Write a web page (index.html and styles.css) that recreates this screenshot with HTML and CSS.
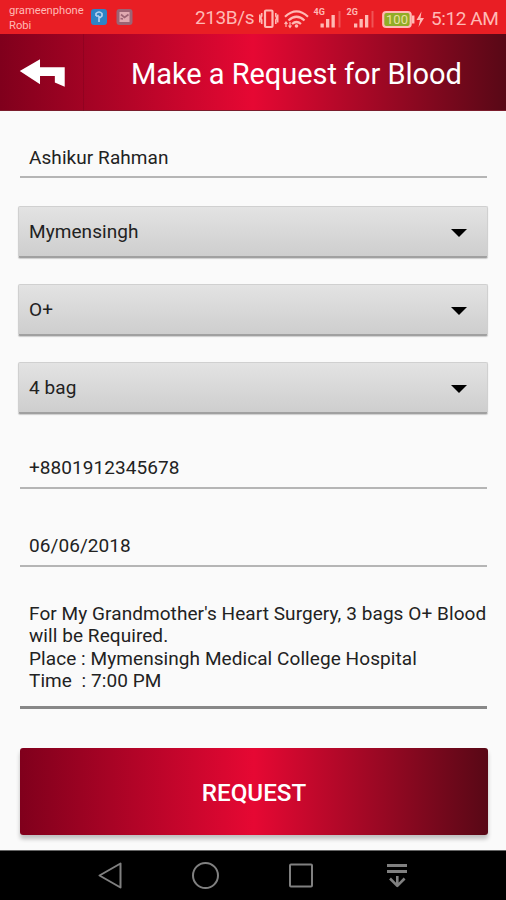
FILE: index.html
```html
<!DOCTYPE html>
<html lang="en">
<head>
<meta charset="utf-8">
<title>Make a Request for Blood</title>
<link rel="stylesheet" href="styles.css">
</head>
<body>
<div class="status">
  <div class="carriers"><span>grameenphone</span><span>Robi</span></div>
  <svg class="notices" width="44" height="18" viewBox="0 0 44 18">
    <rect x="1" y="1" width="16" height="16" rx="3" fill="#2d83c6"/>
    <path d="M9 14V8M6 8V5.500Q9 2.500 12 5.500V8Q10 10 9 10M6 8H9" fill="none" stroke="#b7d2ee" stroke-width="1.600"/>
    <rect x="26.500" y="1" width="16" height="16" rx="3" fill="#9c6474"/>
    <rect x="29.500" y="4" width="10" height="10" fill="#e0a9b1"/>
    <path d="M31 6.500l3.500 3 4-3M30.500 10.500l2.500.500" fill="none" stroke="#9c6474" stroke-width="1.700"/>
  </svg>
  <span class="speed">213B/s</span>
  <svg class="signals" width="170" height="32" viewBox="0 0 170 32" fill="none" stroke="#ffb9b4">
    <rect x="6" y="8.500" width="7.500" height="16.500" rx="1" stroke-width="2.200"/>
    <path d="M2.700 11v3l-1 2 1 2v4M.8 12.500v8M16.800 11v3l1 2-1 2v4M18.700 12.500v8" stroke-width="1.600"/>
    <path d="M26 14.700Q37.500 4 49 14.700M29.500 18.500Q37.500 11 45.500 18.500M33 22Q37.500 18 42 22" stroke-width="2.200"/>
    <circle cx="37.500" cy="24" r="1.800" fill="#ffb9b4" stroke="none"/>
    <path d="M27 25v-5m-1.500 2 1.500-2 1.500 2M31 20v5.500m-1.500-2 1.500 2 1.500-2" stroke-width="1.200"/>
    <g fill="#ffb9b4" stroke="none">
      <path d="M61.500 21.500h3.300v4h-3.300zM67 17h3.300v8.500H67zM72.500 13h3.300v12.500h-3.300zM95 21.500h3.300v4H95zM100.500 17h3.300v8.500h-3.300zM106 13h3.300v12.500H106z"/>
      <path d="M79.500 9h2v16.500h-2zM112.500 9h2v16.500h-2z" opacity=".35"/>
      <text class="net" x="54.500" y="12.500">4G</text><text class="net" x="87.500" y="12.500">2G</text>
    </g>
    <rect x="124.200" y="10" width="27.500" height="15" rx="3" fill="#91ad26" stroke-width="2.200"/>
    <path d="M154.200 13.500v8" stroke-width="2.500"/>
    <text class="charge" x="138" y="22.200" text-anchor="middle">100</text>
    <path d="M162.500 9.500l-5 8.500h3.500l-1.500 7 5.500-9h-3.500z" fill="#ffb9b4" stroke="none"/>
  </svg>
  <span class="clock">5:12 AM</span>
</div>
<header class="bar">
  <svg class="back" width="84" height="77" viewBox="0 0 84 77"><path d="M20 37L40.500 25v8.300H65.500V53L55.500 48.500V42H40.500v8.500z" fill="#fff"/></svg>
  <h1>Make a Request for Blood</h1>
</header>
<main>
  <div class="field name">Ashikur Rahman</div>
  <div class="select"><span>Mymensingh</span><i></i></div>
  <div class="select"><span>O+</span><i></i></div>
  <div class="select"><span>4 bag</span><i></i></div>
  <div class="field phone">+8801912345678</div>
  <div class="field date">06/06/2018</div>
  <div class="field note"><p>For My Grandmother's Heart Surgery, 3 bags O+ Blood
will be Required.
Place : Mymensingh Medical College Hospital
Time  : 7:00 PM</p></div>
  <button>REQUEST</button>
</main>
<nav>
  <svg width="506" height="49" viewBox="0 0 506 49" fill="none" stroke="#808080" stroke-width="2" stroke-linejoin="round">
    <path d="M99.500 24.500L120.500 12.500V36.500z"/>
    <circle cx="205.500" cy="24.500" r="12.500"/>
    <rect x="290" y="13.500" width="22" height="22" rx="1"/>
    <path d="M387 14.500h20M387 20.500h20" stroke-width="3"/>
    <path d="M397.300 25v10M390 27.500l7.300 7.300 7.300-7.300" stroke-width="2.600"/>
  </svg>
</nav>
</body>
</html>
```
FILE: styles.css
```css
* { box-sizing: border-box; }
body {
  margin: 0;
  width: 506px;
  height: 900px;
  overflow: hidden;
  display: flex;
  flex-direction: column;
  background: #fafafa;
  color: #222;
  font-family: Roboto, "Liberation Sans", sans-serif;
}
.status {
  height: 34px;
  flex: none;
  display: flex;
  align-items: center;
  background: #e91e24;
  color: #ffb9b4;
  white-space: nowrap;
}
.carriers {
  width: 90px;
  padding: 2px 0 0 9px;
  display: flex;
  flex-direction: column;
  font-size: 11.200px;
  line-height: 15.500px;
}
.notices { flex: none; }
.speed { width: 64px; margin-left: 61px; font-size: 19px; line-height: 34px; padding-top: 2px; letter-spacing: -.4px; }
.signals { flex: none; margin-top: 1px; }
.net { font: bold 9px Roboto, sans-serif; }
.charge { font: 13px Roboto, sans-serif; fill: #e9e0a0; stroke: none; }
.clock { margin-left: 2px; font-size: 19px; padding-top: 2px; letter-spacing: -.4px; }
.bar {
  height: 77px;
  flex: none;
  display: flex;
  align-items: center;
  background: linear-gradient(90deg, #80001c, #e60833 50%, #580816);
  border-bottom: 1px solid #7b1c2c;
}
.back { width: 84px; flex: none; border-right: 1px solid rgba(90, 0, 25, .22); }
h1 {
  margin: 3px 0 0 47px;
  color: #fff;
  font-size: 29px;
  font-weight: 400;
  letter-spacing: -.05px;
  white-space: nowrap;
}
main {
  flex: 1;
  display: flex;
  flex-direction: column;
  padding: 0 18px;
  font-size: 19px;
  letter-spacing: .07px;
}
.field {
  margin: 0 1px 0 2px;
  padding-left: 9px;
  border-bottom: 2px solid #b5b5b5;
  white-space: pre;
}
.name { height: 67px; padding-top: 36px; margin-bottom: 28px; line-height: 22px; }
.select {
  height: 52px;
  margin-bottom: 26px;
  padding: 0 20px 0 10px;
  display: flex;
  align-items: center;
  justify-content: space-between;
  background: linear-gradient(#e3e3e3, #cecece);
  border: 1px solid #d0d0d0;
  border-bottom: 2px solid #a0a0a0;
  border-radius: 2px;
  box-shadow: 0 1px 1px #ccc;
}
.select i { margin-top: 2px; border: 8px solid transparent; border-top-color: #000; border-bottom: 0; }
.phone { height: 49px; margin-bottom: 28px; padding-top: 17px; line-height: 22px; }
.date { height: 50px; margin-bottom: 28px; padding-top: 18px; line-height: 22px; }
.note { height: 114px; padding-top: 7.500px; border-bottom: 3px solid #888; }
.note p { margin: 0; line-height: 22.500px; }
button {
  height: 87px;
  margin: 39px 0 0 2px;
  border: 0;
  border-radius: 3px;
  background: linear-gradient(90deg, #80001c, #e60833 50%, #580816);
  box-shadow: 0 4px 4px rgba(0, 0, 0, .24);
  color: #fff;
  font: 500 24.200px Roboto, sans-serif;
  padding-top: 3px;
}
nav { height: 50px; flex: none; background: #000; border-top: 1px solid #666; }
nav svg { display: block; }
```
